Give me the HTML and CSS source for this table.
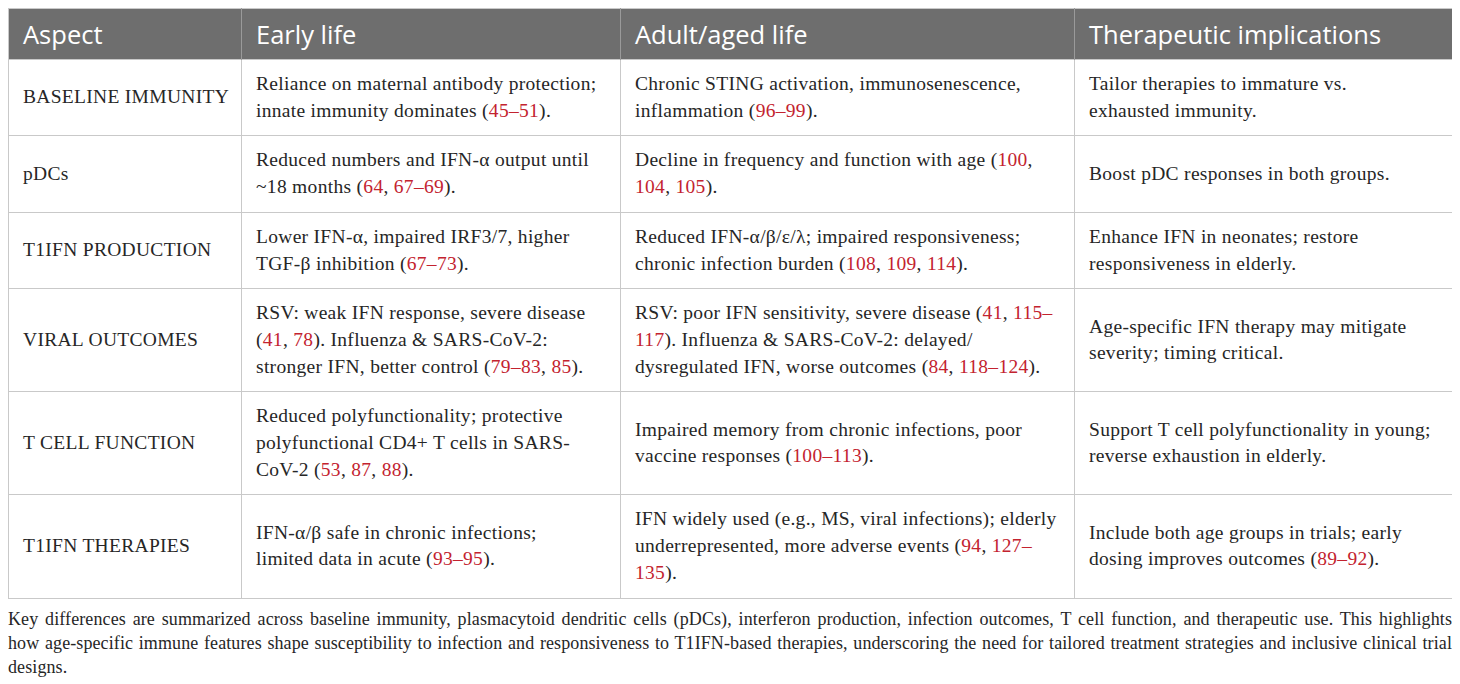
FILE: index.html
```html
<!DOCTYPE html>
<html lang="en">
<head>
<meta charset="utf-8">
<title>Table</title>
<link rel="stylesheet" href="styles.css">
</head>
<body>
<table class="data">
  <colgroup>
    <col class="c1"><col class="c2"><col class="c3"><col class="c4">
  </colgroup>
  <thead>
    <tr><th>Aspect</th><th>Early life</th><th>Adult/aged life</th><th>Therapeutic implications</th></tr>
  </thead>
  <tbody>
    <tr>
      <td>BASELINE IMMUNITY</td>
      <td>Reliance on maternal antibody protection;<br>innate immunity dominates (<a>45–51</a>).</td>
      <td>Chronic STING activation, immunosenescence,<br>inflammation (<a>96–99</a>).</td>
      <td>Tailor therapies to immature vs.<br>exhausted immunity.</td>
    </tr>
    <tr>
      <td>pDCs</td>
      <td>Reduced numbers and IFN-α output until<br>~18 months (<a>64</a>, <a>67–69</a>).</td>
      <td>Decline in frequency and function with age (<a>100</a>,<br><a>104</a>, <a>105</a>).</td>
      <td>Boost pDC responses in both groups.</td>
    </tr>
    <tr>
      <td>T1IFN PRODUCTION</td>
      <td>Lower IFN-α, impaired IRF3/7, higher<br>TGF-β inhibition (<a>67–73</a>).</td>
      <td>Reduced IFN-α/β/ε/λ; impaired responsiveness;<br>chronic infection burden (<a>108</a>, <a>109</a>, <a>114</a>).</td>
      <td>Enhance IFN in neonates; restore<br>responsiveness in elderly.</td>
    </tr>
    <tr>
      <td>VIRAL OUTCOMES</td>
      <td>RSV: weak IFN response, severe disease<br>(<a>41</a>, <a>78</a>). Influenza &amp; SARS-CoV-2:<br>stronger IFN, better control (<a>79–83</a>, <a>85</a>).</td>
      <td>RSV: poor IFN sensitivity, severe disease (<a>41</a>, <a>115–</a><br><a>117</a>). Influenza &amp; SARS-CoV-2: delayed/<br>dysregulated IFN, worse outcomes (<a>84</a>, <a>118–124</a>).</td>
      <td>Age-specific IFN therapy may mitigate<br>severity; timing critical.</td>
    </tr>
    <tr>
      <td>T CELL FUNCTION</td>
      <td>Reduced polyfunctionality; protective<br>polyfunctional CD4+ T cells in SARS-<br>CoV-2 (<a>53</a>, <a>87</a>, <a>88</a>).</td>
      <td>Impaired memory from chronic infections, poor<br>vaccine responses (<a>100–113</a>).</td>
      <td>Support T cell polyfunctionality in young;<br>reverse exhaustion in elderly.</td>
    </tr>
    <tr>
      <td>T1IFN THERAPIES</td>
      <td>IFN-α/β safe in chronic infections;<br>limited data in acute (<a>93–95</a>).</td>
      <td>IFN widely used (e.g., MS, viral infections); elderly<br>underrepresented, more adverse events (<a>94</a>, <a>127–</a><br><a>135</a>).</td>
      <td>Include both age groups in trials; early<br>dosing improves outcomes (<a>89–92</a>).</td>
    </tr>
  </tbody>
</table>
<p class="caption">Key differences are summarized across baseline immunity, plasmacytoid dendritic cells (pDCs), interferon production, infection outcomes, T cell function, and therapeutic use. This highlights<br>how age-specific immune features shape susceptibility to infection and responsiveness to T1IFN-based therapies, underscoring the need for tailored treatment strategies and inclusive clinical trial<br>designs.</p>
</body>
</html>
```

FILE: styles.css
```css
html, body {
  background: #ffffff;
}
body {
  margin: 8px;
  font-family: "Liberation Serif", "Times New Roman", serif;
  color: #262626;
}
.data {
  width: 1444px;
  border-collapse: collapse;
  table-layout: fixed;
  border: 1px solid #c9c9c9;
}
.c1 { width: 233px; }
.c2 { width: 379px; }
.c3 { width: 454px; }
.c4 { width: 378px; }
.data th {
  background: #6e6e6e;
  color: #ffffff;
  font-family: "Open Sans", "Noto Sans", sans-serif;
  font-weight: 400;
  font-size: 25.5px;
  line-height: 30px;
  text-align: left;
  padding: 10px 8px 10px 14px;
  border-left: 1px solid #9a9a9a;
}
.data th:first-child { border-left: none; }
.data td {
  font-size: 19.5px;
  letter-spacing: 0.3px;
  line-height: 26.7px;
  padding: 11px 6px 11px 14px;
  vertical-align: middle;
  border: 1px solid #c9c9c9;
  white-space: nowrap;
}
.data a {
  color: #c3232f;
  text-decoration: none;
}
.caption {
  margin: 8px 0 0 0;
  font-size: 18px;
  letter-spacing: 0.1px;
  line-height: 24px;
  text-align: justify;
  text-align-last: justify;
  color: #262626;
}
```
